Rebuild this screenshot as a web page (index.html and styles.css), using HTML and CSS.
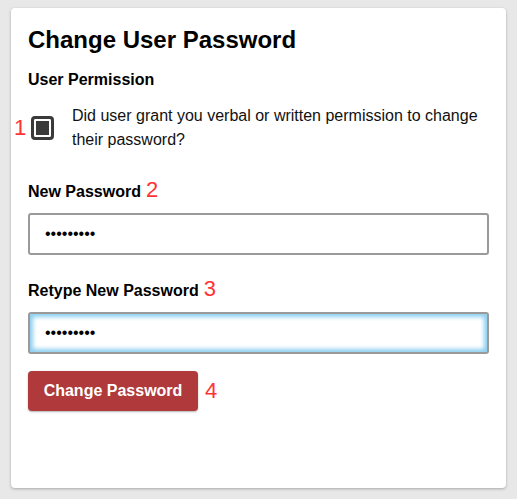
FILE: index.html
```html
<!DOCTYPE html>
<html>
<head>
<meta charset="utf-8">
<link rel="stylesheet" href="styles.css">
</head>
<body>
<div class="card">
  <h1 class="title">Change User Password</h1>
  <div class="section-label">User Permission</div>
  <div class="perm-row">
    <span class="note note-1">1</span>
    <input type="checkbox" class="check" checked>
    <div class="perm-text">Did user grant you verbal or written permission to change their password?</div>
  </div>
  <label class="field-label">New Password<span class="note">2</span></label>
  <input type="password" class="pw" value="123456789">
  <label class="field-label second">Retype New Password<span class="note">3</span></label>
  <input type="password" class="pw focused" value="123456789" autofocus>
  <div class="actions">
    <button class="btn">Change Password</button>
    <span class="note">4</span>
  </div>
</div>
</body>
</html>
```

FILE: styles.css
```css
html, body {
  margin: 0;
  padding: 0;
}
body {
  background: #e8e8e8;
  padding: 8px 11px 11px 11px;
  font-family: "Liberation Sans", Arial, sans-serif;
  color: #111;
}
.card {
  background: #fff;
  width: 495px;
  height: 480px;
  box-sizing: border-box;
  border-radius: 4px;
  box-shadow: 0 1px 3px rgba(0,0,0,0.28);
  padding: 18px 17px 0 17px;
}
.title {
  margin: 0;
  font-size: 24px;
  line-height: 28px;
  font-weight: bold;
  color: #000;
}
.section-label {
  margin-top: 16px;
  font-size: 16px;
  line-height: 20px;
  font-weight: bold;
  color: #000;
}
.perm-row {
  position: relative;
  margin-top: 14px;
  display: flex;
  align-items: center;
}
.check {
  appearance: none;
  -webkit-appearance: none;
  margin: 0 18px 0 3px;
  width: 23px;
  height: 24px;
  flex: none;
  box-sizing: border-box;
  border: 3px solid #3a3a3a;
  border-radius: 4px;
  background: #fff;
  box-shadow: inset 0 0 0 2px #fff, inset 0 0 0 9px #3a3a3a;
}
.perm-text {
  font-size: 16px;
  line-height: 24px;
  color: #111;
}
.note {
  color: #f33;
  font-size: 22px;
  line-height: 0;
  font-weight: normal;
  margin-left: 5px;
}
.note-1 {
  position: absolute;
  left: -14px;
  top: 13px;
  margin: 0;
  line-height: 22px;
}
.field-label {
  display: block;
  margin-top: 30px;
  font-size: 16px;
  line-height: 20px;
  font-weight: bold;
  color: #000;
}
.field-label.second {
  margin-top: 26px;
}
.pw {
  display: block;
  margin: 11px 0 0 0;
  width: 461px;
  height: 42px;
  box-sizing: border-box;
  border: 2px solid #9a9a9a;
  border-radius: 3px;
  padding: 0 15px;
  font-family: "Liberation Sans", Arial, sans-serif;
  font-size: 16px;
  color: #000;
  background: #fff;
  outline: none;
}
.pw.focused {
  box-shadow: inset 0 0 4px 3px #8ccff0;
}
.pw:focus {
  outline: none;
}
.actions {
  margin-top: 17px;
  display: flex;
  align-items: center;
}
.btn {
  height: 40px;
  width: 170px;
  padding: 0;
  border: none;
  border-radius: 4px;
  background: #af393b;
  color: #fff;
  font-family: "Liberation Sans", Arial, sans-serif;
  font-size: 16px;
  font-weight: bold;
  box-shadow: 0 1px 2px rgba(0,0,0,0.3);
}
.actions .note {
  line-height: 22px;
  margin-left: 7px;
}
```
